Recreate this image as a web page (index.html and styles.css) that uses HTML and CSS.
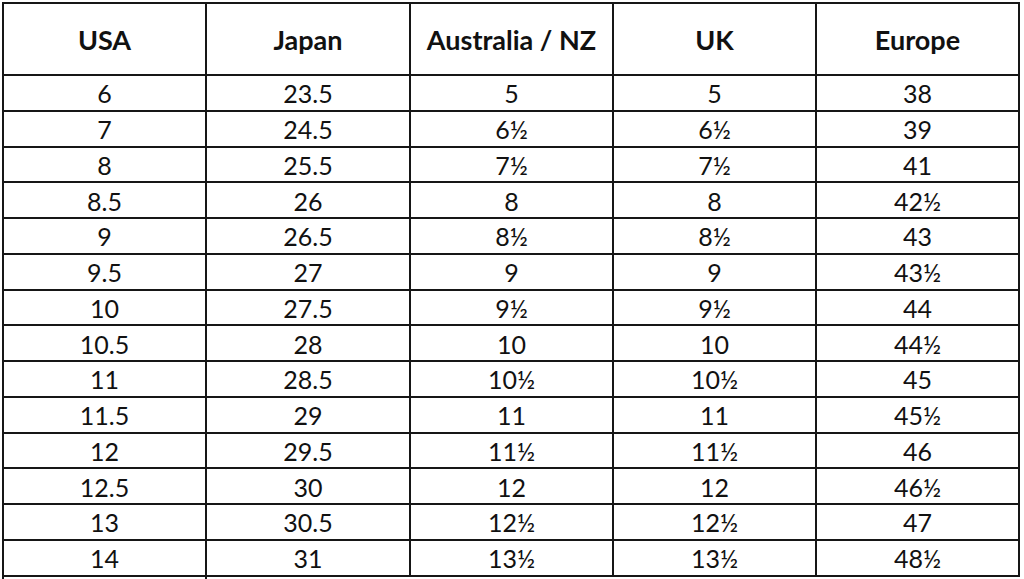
FILE: index.html
```html
<!DOCTYPE html>
<html>
<head>
<meta charset="utf-8">
<link rel="stylesheet" href="styles.css">
</head>
<body>
<div class="page">
  <div class="chart">
    <div class="cell head">USA</div>
    <div class="cell head">Japan</div>
    <div class="cell head">Australia / NZ</div>
    <div class="cell head">UK</div>
    <div class="cell head">Europe</div>

    <div class="cell">6</div><div class="cell">23.5</div><div class="cell">5</div><div class="cell">5</div><div class="cell">38</div>
    <div class="cell">7</div><div class="cell">24.5</div><div class="cell">6½</div><div class="cell">6½</div><div class="cell">39</div>
    <div class="cell">8</div><div class="cell">25.5</div><div class="cell">7½</div><div class="cell">7½</div><div class="cell">41</div>
    <div class="cell">8.5</div><div class="cell">26</div><div class="cell">8</div><div class="cell">8</div><div class="cell">42½</div>
    <div class="cell">9</div><div class="cell">26.5</div><div class="cell">8½</div><div class="cell">8½</div><div class="cell">43</div>
    <div class="cell">9.5</div><div class="cell">27</div><div class="cell">9</div><div class="cell">9</div><div class="cell">43½</div>
    <div class="cell">10</div><div class="cell">27.5</div><div class="cell">9½</div><div class="cell">9½</div><div class="cell">44</div>
    <div class="cell">10.5</div><div class="cell">28</div><div class="cell">10</div><div class="cell">10</div><div class="cell">44½</div>
    <div class="cell">11</div><div class="cell">28.5</div><div class="cell">10½</div><div class="cell">10½</div><div class="cell">45</div>
    <div class="cell">11.5</div><div class="cell">29</div><div class="cell">11</div><div class="cell">11</div><div class="cell">45½</div>
    <div class="cell">12</div><div class="cell">29.5</div><div class="cell">11½</div><div class="cell">11½</div><div class="cell">46</div>
    <div class="cell">12.5</div><div class="cell">30</div><div class="cell">12</div><div class="cell">12</div><div class="cell">46½</div>
    <div class="cell">13</div><div class="cell">30.5</div><div class="cell">12½</div><div class="cell">12½</div><div class="cell">47</div>
    <div class="cell">14</div><div class="cell">31</div><div class="cell">13½</div><div class="cell">13½</div><div class="cell">48½</div>
  </div>
  <div class="tail"></div>
</div>
</body>
</html>
```

FILE: styles.css
```css
html, body {
  margin: 0;
  padding: 0;
  background: #ffffff;
}
body {
  width: 1024px;
  height: 579px;
  overflow: hidden;
  font-family: Lato, "Liberation Sans", sans-serif;
  color: #111111;
}
.page {
  padding: 2px 0 0 2px;
  display: flex;
  flex-direction: column;
}
.chart {
  width: 1018px;
  box-sizing: border-box;
  display: grid;
  grid-template-columns: 201px 202px 201px 201px 201px;
  grid-template-rows: 70px repeat(14, 33.75px);
  gap: 2px;
  padding: 2px;
  background: #161616;
}
.cell {
  background: #ffffff;
  display: flex;
  align-items: center;
  justify-content: center;
  font-size: 25px;
  line-height: 1;
  padding-top: 2px;
  box-sizing: border-box;
}
.cell.head {
  font-weight: 700;
  font-size: 27px;
  padding-top: 0;
}
.tail {
  width: 205px;
  height: 12px;
  box-sizing: border-box;
  border-left: 2px solid #161616;
  border-right: 2px solid #161616;
}
```
